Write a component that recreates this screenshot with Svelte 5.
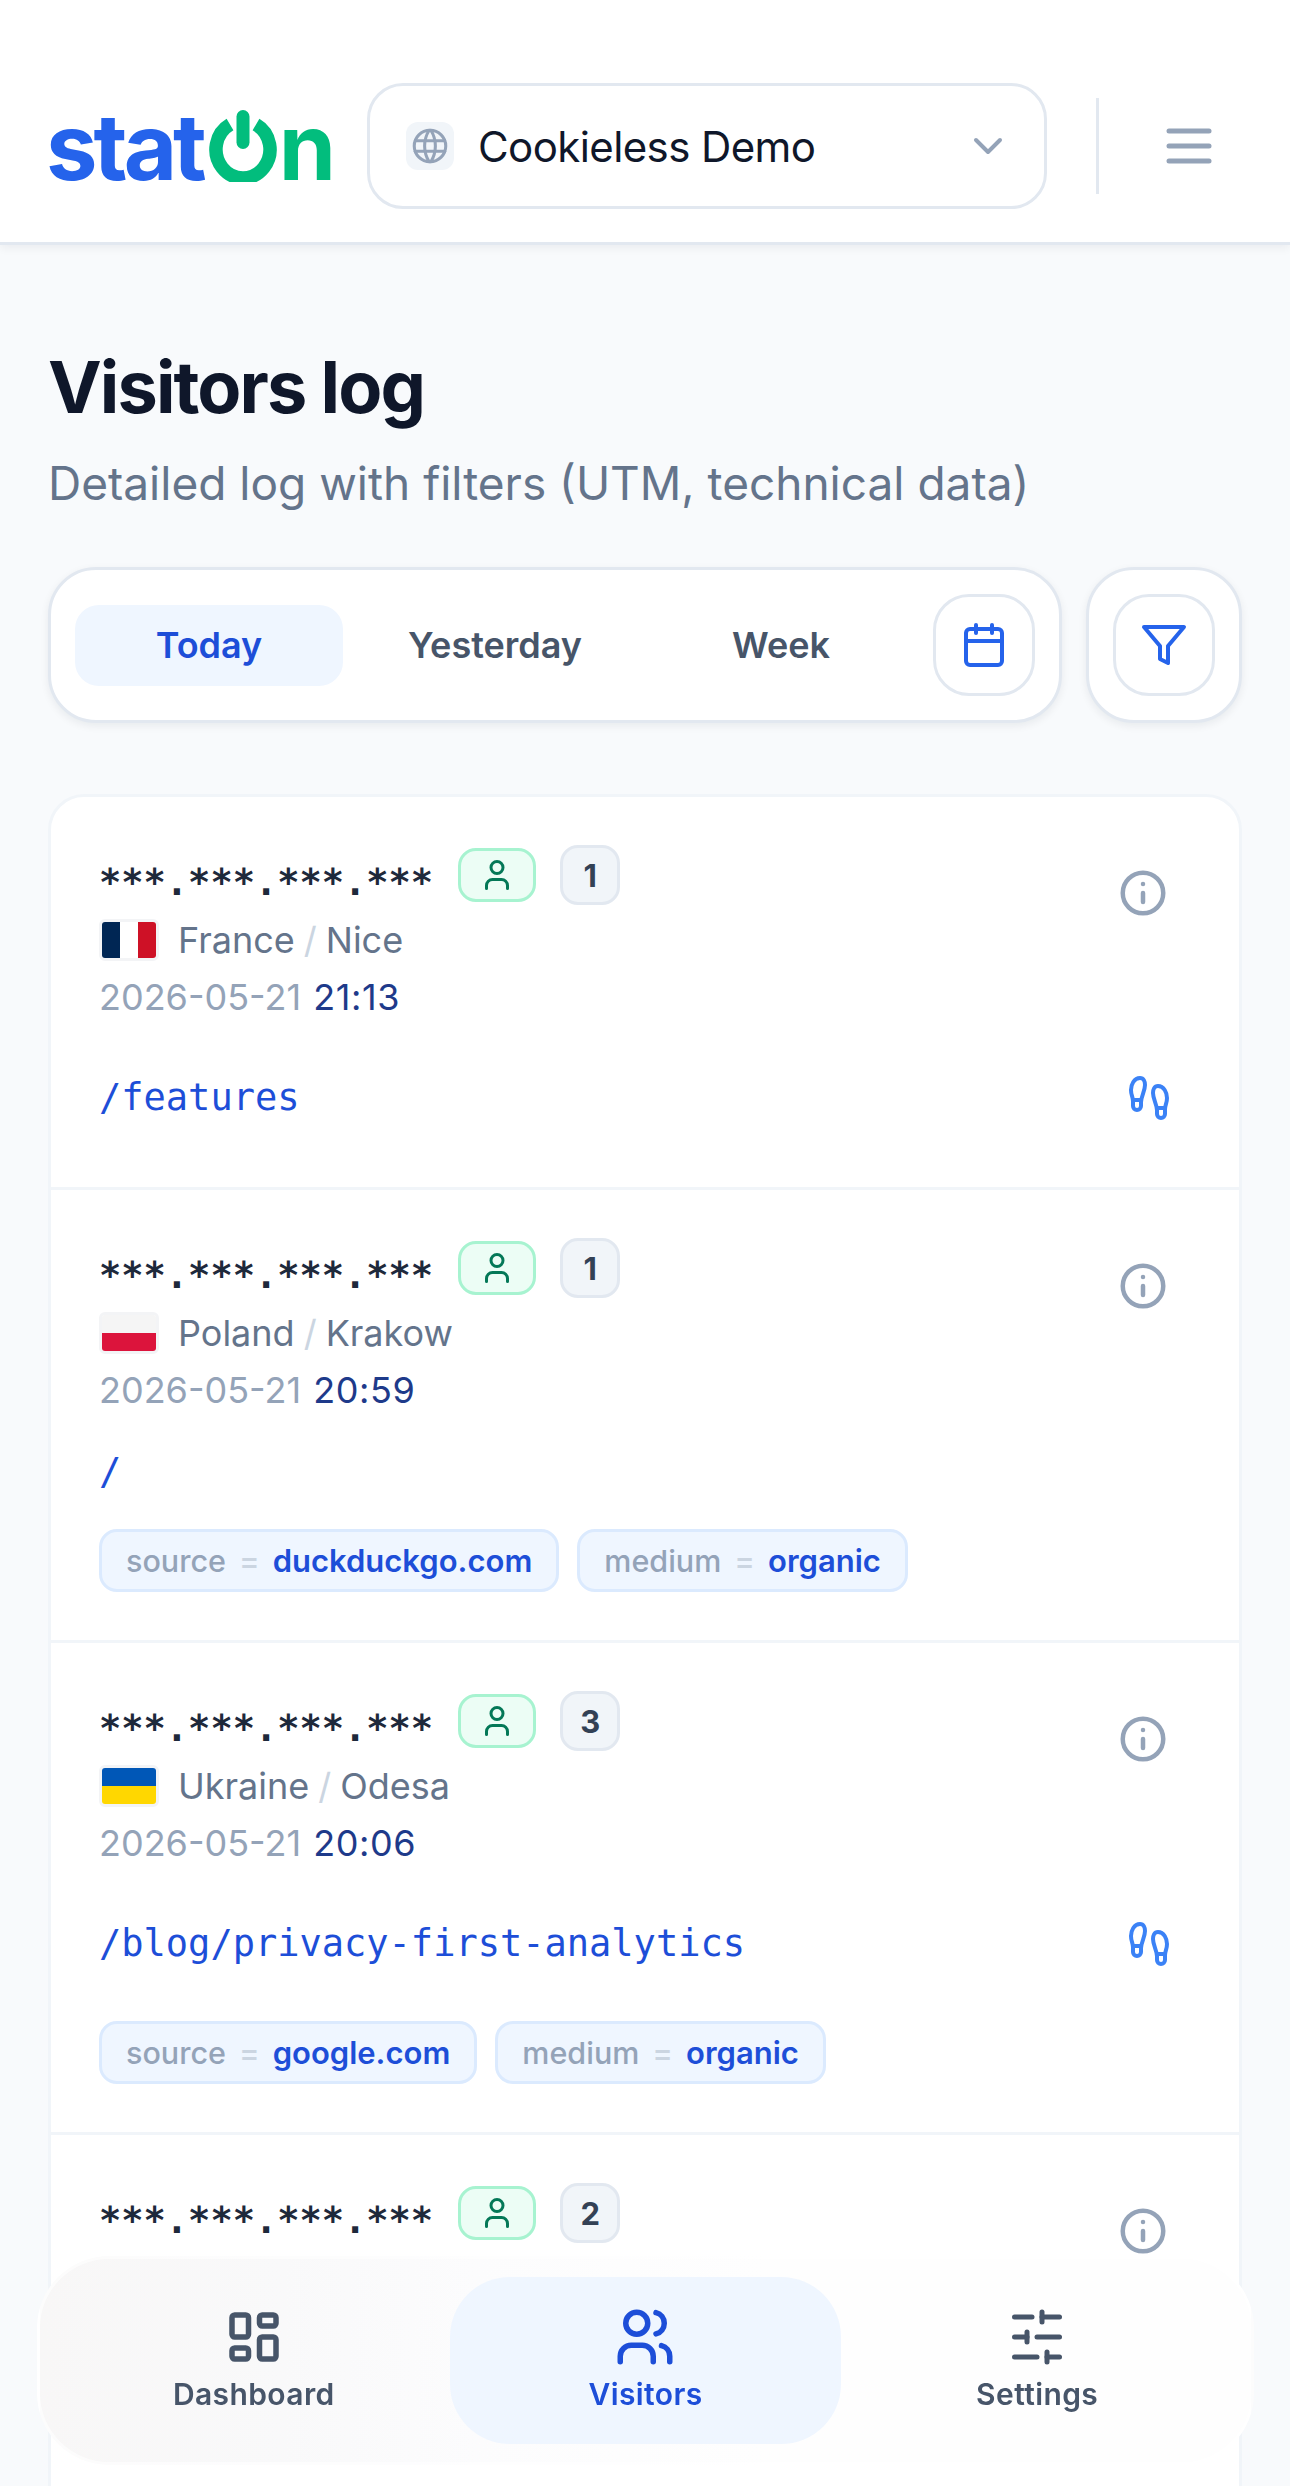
<script>
  const visitors = [
    { count: 1, flag: 'fr', country: 'France', city: 'Nice', time: '21:13', path: '/features', walk: true, tags: [] },
    {
      count: 1, flag: 'pl', country: 'Poland', city: 'Krakow', time: '20:59', path: '/', walk: false,
      tags: [['source', 'duckduckgo.com'], ['medium', 'organic']]
    },
    {
      count: 3, flag: 'ua', country: 'Ukraine', city: 'Odesa', time: '20:06', path: '/blog/privacy-first-analytics', walk: true,
      tags: [['source', 'google.com'], ['medium', 'organic']]
    },
    // the rest of this row sits behind the bottom nav
    { count: 2 }
  ];

  let period = $state('Today');
</script>

<div class="page">
  <header class="topbar">
    <div class="logo">
      <span class="logo-blue">stat</span><svg class="power" viewBox="0 0 68 72" aria-hidden="true">
        <path d="M21 14.500a27 28.500 0 1 0 26 0" fill="none" stroke="#02bd7d" stroke-width="13.500" />
        <rect x="27.500" y="0" width="13" height="39" rx="6.500" fill="#02bd7d" />
      </svg><span class="logo-green">n</span>
    </div>

    <button class="site-select">
      <span class="globe">
        <svg viewBox="0 0 24 24" width="42" height="42" class="line thin" stroke="#94a3b8">
          <path d="M3 12a9 9 0 1 0 18 0a9 9 0 0 0 -18 0" />
          <path d="M3.600 9h16.800" />
          <path d="M3.600 15h16.800" />
          <path d="M11.500 3a17 17 0 0 0 0 18" />
          <path d="M12.500 3a17 17 0 0 1 0 18" />
        </svg>
      </span>
      <span class="site-name">Cookieless Demo</span>
      <svg viewBox="0 0 24 24" width="48" height="48" class="line chevron" stroke="#94a3b8">
        <path d="M6 9l6 6l6 -6" />
      </svg>
    </button>

    <div class="divider"></div>

    <button class="menu">
      <svg viewBox="0 0 24 24" width="60" height="60" class="line" stroke="#94a3b8">
        <path d="M4 6h16" />
        <path d="M4 12h16" />
        <path d="M4 18h16" />
      </svg>
    </button>
  </header>

  <main class="content">
    <h1>Visitors log</h1>
    <p class="subtitle">Detailed log with filters (UTM, technical data)</p>

    <div class="toolbar">
      <div class="periods">
        {#each ['Today', 'Yesterday', 'Week'] as p}
          <button class="period" class:active={period === p} onclick={() => (period = p)}>{p}</button>
        {/each}
        <button class="square">
          <svg viewBox="0 0 24 24" width="48" height="48" class="line" stroke="#2563eb">
            <rect x="3" y="4" width="18" height="18" rx="2" />
            <path d="M16 2v4" />
            <path d="M8 2v4" />
            <path d="M3 10h18" />
          </svg>
        </button>
      </div>
      <div class="filter-box">
        <button class="square">
          <svg viewBox="0 0 24 24" width="48" height="48" class="line" stroke="#2563eb">
            <polygon points="22 3 2 3 10 12.460 10 19 14 21 14 12.460 22 3" />
          </svg>
        </button>
      </div>
    </div>

    <section class="log">
      {#each visitors as v}
        <article class="row" class:cut={!v.path}>
          <div class="top">
            <div>
              <div class="ip-line">
                <span class="ip">***.***.***.***</span>
                <span class="kind">
                  <svg viewBox="0 0 24 24" width="36" height="36" class="line" stroke="#047857">
                    <circle cx="12" cy="7" r="4" />
                    <path d="M19 21v-2a4 4 0 0 0-4-4H9a4 4 0 0 0-4 4v2" />
                  </svg>
                </span>
                <span class="count">{v.count}</span>
              </div>
              {#if v.path}
                <div class="place">
                  <span class="flag {v.flag}"><i></i><i></i><i></i></span>
                  <span>{v.country}</span>
                  <span class="slash">/</span>
                  <span>{v.city}</span>
                </div>
                <div class="date">2026-05-21 <span class="time">{v.time}</span></div>
              {/if}
            </div>
            <svg viewBox="0 0 24 24" width="54" height="54" class="line info" stroke="#94a3b8">
              <path d="M3 12a9 9 0 1 0 18 0a9 9 0 0 0 -18 0" />
              <path d="M12 8h.01" />
              <path d="M12 12v4" />
            </svg>
          </div>

          {#if v.path}
            <div class="path-row" class:walk={v.walk}>
              <span class="path">{v.path}</span>
              {#if v.walk}
                <svg viewBox="0 0 24 24" width="48" height="48" class="line steps" stroke="#3b82f6">
                  <path d="M4 16v-2.380C4 11.500 2.970 10.500 3 8c.030-2.720 1.490-6 4.500-6C9.370 2 10 3.800 10 5.500c0 3.110-2 5.660-2 8.680V16a2 2 0 1 1-4 0Z" />
                  <path d="M20 20v-2.380c0-2.120 1.030-3.120 1-5.620-.030-2.720-1.490-6-4.500-6C14.630 6 14 7.800 14 9.500c0 3.110 2 5.660 2 8.680V20a2 2 0 1 0 4 0Z" />
                  <path d="M16 17h4" />
                  <path d="M4 13h4" />
                </svg>
              {/if}
            </div>
          {/if}

          {#if v.tags?.length}
            <div class="tags">
              {#each v.tags as [key, value]}
                <span class="tag"><span class="key">{key}</span><span class="eq">=</span><span class="value">{value}</span></span>
              {/each}
            </div>
          {/if}
        </article>
      {/each}
    </section>
  </main>

  <nav class="bottom-nav">
    <button class="nav-item">
      <span class="nav-icon">
        <svg viewBox="0 0 24 24" width="66" height="66" class="line" stroke="#475569">
          <path d="M5 4h4a1 1 0 0 1 1 1v6a1 1 0 0 1 -1 1h-4a1 1 0 0 1 -1 -1v-6a1 1 0 0 1 1 -1" />
          <path d="M5 16h4a1 1 0 0 1 1 1v2a1 1 0 0 1 -1 1h-4a1 1 0 0 1 -1 -1v-2a1 1 0 0 1 1 -1" />
          <path d="M15 12h4a1 1 0 0 1 1 1v6a1 1 0 0 1 -1 1h-4a1 1 0 0 1 -1 -1v-6a1 1 0 0 1 1 -1" />
          <path d="M15 4h4a1 1 0 0 1 1 1v2a1 1 0 0 1 -1 1h-4a1 1 0 0 1 -1 -1v-2a1 1 0 0 1 1 -1" />
        </svg>
      </span>
      Dashboard
    </button>
    <button class="nav-item current">
      <span class="nav-icon">
        <svg viewBox="0 0 24 24" width="66" height="66" class="line" stroke="#1d4ed8">
          <path d="M5 7a4 4 0 1 0 8 0a4 4 0 0 0 -8 0" />
          <path d="M3 21v-2a4 4 0 0 1 4 -4h4a4 4 0 0 1 4 4v2" />
          <path d="M16 3.130a4 4 0 0 1 0 7.750" />
          <path d="M21 21v-2a4 4 0 0 0 -3 -3.850" />
        </svg>
      </span>
      Visitors
    </button>
    <button class="nav-item">
      <span class="nav-icon">
        <svg viewBox="0 0 24 24" width="60" height="60" class="line" stroke="#475569">
          <path d="M21 4h-7" />
          <path d="M10 4H3" />
          <path d="M21 12h-9" />
          <path d="M8 12H3" />
          <path d="M21 20h-5" />
          <path d="M12 20H3" />
          <path d="M14 2v4" />
          <path d="M8 10v4" />
          <path d="M16 18v4" />
        </svg>
      </span>
      Settings
    </button>
  </nav>
</div>

<style>
  :global(body) {
    margin: 0;
    background: #f8fafc;
    font-family: Inter, "Noto Sans", sans-serif;
    color: #0f172a;
  }

  button {
    font-family: inherit;
    background: none;
    border: none;
    padding: 0;
    margin: 0;
    cursor: pointer;
  }

  .line {
    fill: none;
    stroke-width: 2;
    stroke-linecap: round;
    stroke-linejoin: round;
    display: block;
    flex-shrink: 0;
  }

  .line.thin {
    stroke-width: 1.750;
  }

  .page {
    height: 2486px;
    overflow: hidden;
    position: relative;
  }

  .topbar {
    display: flex;
    align-items: center;
    box-sizing: border-box;
    height: 245px;
    padding: 83px 48px 33px;
    background: #fff;
    border-bottom: 3px solid #e2e8f0;
    box-shadow: 0 3px 9px rgba(15, 23, 42, 0.06);
  }

  .logo {
    display: flex;
    align-items: flex-end;
    width: 284px;
    height: 72px;
    font-weight: 700;
    font-size: 92px;
    line-height: 72px;
    letter-spacing: -4px;
    margin-left: -2px;
    margin-right: 2px;
    flex-shrink: 0;
  }

  .logo-blue {
    color: #2563eb;
    position: relative;
    top: 1px;
  }

  .logo-green {
    color: #02bd7d;
    position: relative;
    top: 1px;
    margin-left: 2px;
  }

  .power {
    width: 68px;
    height: 72px;
    margin-left: 6px;
    flex-shrink: 0;
  }

  .site-select {
    display: flex;
    align-items: center;
    box-sizing: border-box;
    width: 680px;
    height: 126px;
    margin-left: 35px;
    padding: 0 32px 0 36px;
    border: 3px solid #e2e8f0;
    border-radius: 36px;
    background: #fff;
  }

  .globe {
    width: 48px;
    height: 48px;
    display: flex;
    align-items: center;
    justify-content: center;
    background: #f1f5f9;
    border-radius: 12px;
    flex-shrink: 0;
  }

  .site-name {
    margin-left: 24px;
    font-size: 42px;
    letter-spacing: -0.6px;
    color: #0f172a;
    flex: 1;
    text-align: left;
  }

  .divider {
    width: 3px;
    height: 96px;
    margin-left: 49px;
    background: #e2e8f0;
  }

  .menu {
    margin-left: 60px;
    width: 60px;
    height: 60px;
  }

  .content {
    padding: 94px 48px 0;
  }

  h1 {
    margin: 0;
    font-size: 72px;
    line-height: 96px;
    font-weight: 700;
    letter-spacing: -1.900px;
    color: #0f172a;
  }

  .subtitle {
    margin: 18px 0 0;
    font-size: 46px;
    line-height: 60px;
    color: #64748b;
  }

  .toolbar {
    display: flex;
    gap: 24px;
    margin-top: 54px;
  }

  .periods,
  .filter-box {
    display: flex;
    align-items: center;
    box-sizing: border-box;
    height: 156px;
    padding: 0 24px;
    background: #fff;
    border: 3px solid #e2e8f0;
    border-radius: 48px;
    box-shadow: 0 3px 9px rgba(15, 23, 42, 0.07);
  }

  .periods {
    flex: 1;
    gap: 18px;
  }

  .period {
    width: 268px;
    height: 81px;
    border-radius: 24px;
    font-size: 36px;
    font-weight: 600;
    color: #475569;
  }

  .period.active {
    background: #eff6ff;
    color: #1d4ed8;
  }

  .square {
    width: 102px;
    height: 102px;
    box-sizing: border-box;
    display: flex;
    align-items: center;
    justify-content: center;
    border: 3px solid #e2e8f0;
    border-radius: 36px;
    background: #fff;
    flex-shrink: 0;
  }

  .log {
    margin-top: 71px;
    background: #fff;
    border: 3px solid #f1f5f9;
    border-radius: 36px;
  }

  .row {
    padding: 48px;
    border-bottom: 3px solid #f1f5f9;
  }

  .row.cut {
    min-height: 420px;
  }

  .top {
    display: flex;
    justify-content: space-between;
    align-items: flex-start;
  }

  .info {
    margin: 21px 21px 0 0;
  }

  .ip-line {
    display: flex;
    align-items: center;
    height: 60px;
  }

  .ip {
    font-family: "DejaVu Sans Mono", monospace;
    font-size: 37px;
    font-weight: 700;
    color: #1e293b;
    position: relative;
    top: 7px;
  }

  .kind {
    display: flex;
    align-items: center;
    justify-content: center;
    box-sizing: border-box;
    width: 78px;
    height: 54px;
    margin-left: 25px;
    background: #ecfdf5;
    border: 3px solid #a7f3d0;
    border-radius: 18px;
  }

  .count {
    display: flex;
    align-items: center;
    justify-content: center;
    box-sizing: border-box;
    min-width: 60px;
    height: 60px;
    margin-left: 24px;
    padding: 0 15px;
    background: #f1f5f9;
    border: 3px solid #e2e8f0;
    border-radius: 18px;
    font-size: 31px;
    font-weight: 700;
    color: #334155;
  }

  .place {
    display: flex;
    align-items: center;
    height: 54px;
    margin-top: 8px;
    font-size: 36px;
    color: #64748b;
  }

  .flag {
    display: flex;
    width: 60px;
    height: 42px;
    box-sizing: border-box;
    border: 3px solid #f3f4f6;
    border-radius: 6px;
    overflow: hidden;
    margin-right: 19px;
  }

  .flag i {
    flex: 1;
  }

  .flag.fr i:nth-child(1) { background: #002654; }
  .flag.fr i:nth-child(2) { background: #fff; }
  .flag.fr i:nth-child(3) { background: #ce1126; }

  .flag.pl,
  .flag.ua {
    flex-direction: column;
  }

  .flag.pl i:nth-child(1) { background: #f5f5f5; }
  .flag.pl i:nth-child(2) { background: #dc143c; }
  .flag.pl i:nth-child(3),
  .flag.ua i:nth-child(3) { display: none; }

  .flag.ua i:nth-child(1) { background: #0057b7; }
  .flag.ua i:nth-child(2) { background: #ffd700; }

  .slash {
    color: #cbd5e1;
    margin: 0 9px;
  }

  .date {
    height: 54px;
    margin-top: 3px;
    line-height: 54px;
    font-size: 36px;
    color: #94a3b8;
  }

  .time {
    margin-left: 2px;
    letter-spacing: 0.6px;
    color: #1e3a8a;
  }

  .path-row {
    display: flex;
    align-items: center;
    justify-content: space-between;
    height: 54px;
    margin-top: 27px;
  }

  .path-row.walk {
    height: 83px;
    margin-top: 32px;
  }

  .path {
    font-family: "DejaVu Sans Mono", monospace;
    font-size: 37px;
    color: #1d4ed8;
  }

  .steps {
    margin-right: 18px;
  }

  .tags {
    display: flex;
    gap: 18px;
    margin-top: 31px;
  }

  .path-row.walk + .tags {
    margin-top: 36px;
  }

  .tag {
    display: flex;
    align-items: center;
    box-sizing: border-box;
    height: 63px;
    padding: 0 24px;
    background: #eff6ff;
    border: 3px solid #dbeafe;
    border-radius: 18px;
    font-size: 31px;
    font-weight: 500;
    color: #94a3b8;
  }

  .key {
    font-size: 30.500px;
  }

  .eq {
    color: #cbd5e1;
    margin: 0 13px;
  }

  .value {
    color: #1d4ed8;
    font-weight: 600;
  }

  .bottom-nav {
    position: fixed;
    left: 37px;
    top: 2256px;
    box-sizing: border-box;
    width: 1217px;
    height: 209px;
    padding: 18px;
    display: grid;
    grid-template-columns: repeat(3, 1fr);
    background: linear-gradient(90deg, #f8f7f7 0%, #f9f9fa 20%, #fcfcfd 36%, #fefefe 60%);
    border: 3px solid rgba(255, 255, 255, 0.6);
    border-radius: 72px;
  }

  .nav-item {
    display: flex;
    flex-direction: column;
    align-items: center;
    justify-content: center;
    padding-bottom: 6px;
    border-radius: 60px;
    font-size: 30px;
    font-weight: 600;
    letter-spacing: 0.4px;
    color: #475569;
  }

  .nav-item.current {
    background: #eff6ff;
    color: #1d4ed8;
  }

  .nav-icon {
    height: 66px;
    display: flex;
    align-items: center;
    justify-content: center;
    margin-bottom: 6px;
  }
</style>
